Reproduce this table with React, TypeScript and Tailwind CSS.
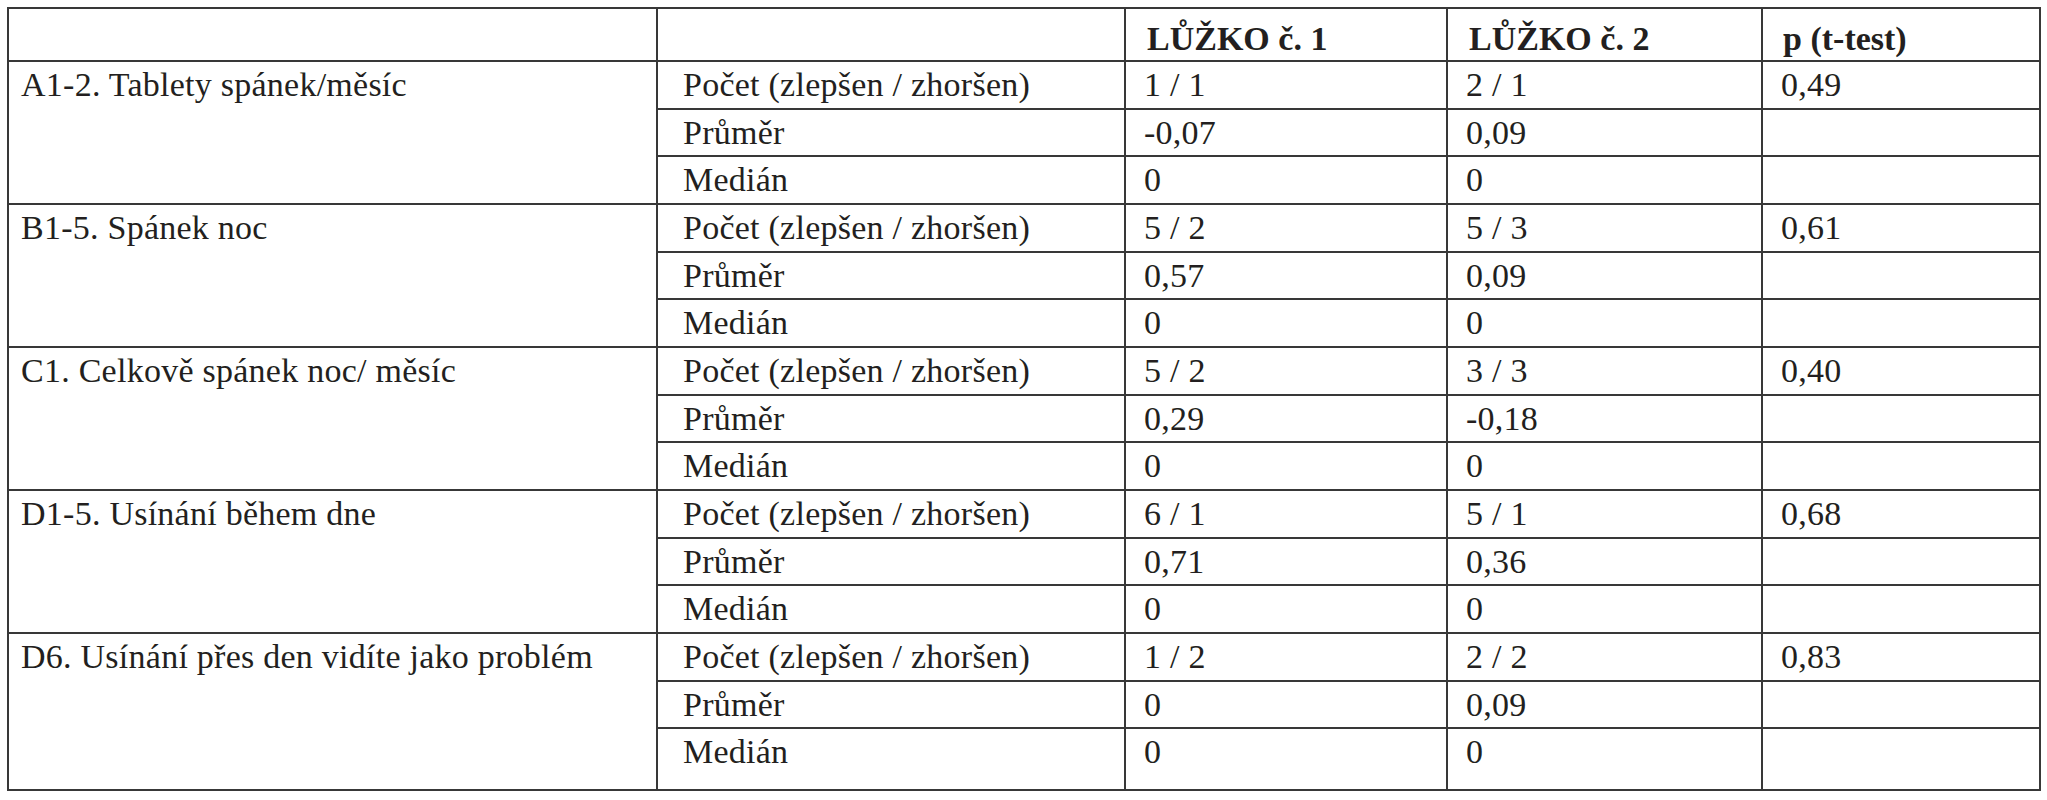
import React from "react";

type Group = {
  title: string;
  rows: { label: string; a: string; b: string; p: string }[];
};

const GROUPS: Group[] = [
  {
    title: "A1-2. Tablety spánek/měsíc",
    rows: [
      { label: "Počet (zlepšen / zhoršen)", a: "1 / 1", b: "2 / 1", p: "0,49" },
      { label: "Průměr", a: "-0,07", b: "0,09", p: "" },
      { label: "Medián", a: "0", b: "0", p: "" },
    ],
  },
  {
    title: "B1-5. Spánek noc",
    rows: [
      { label: "Počet (zlepšen / zhoršen)", a: "5 / 2", b: "5 / 3", p: "0,61" },
      { label: "Průměr", a: "0,57", b: "0,09", p: "" },
      { label: "Medián", a: "0", b: "0", p: "" },
    ],
  },
  {
    title: "C1. Celkově spánek noc/ měsíc",
    rows: [
      { label: "Počet (zlepšen / zhoršen)", a: "5 / 2", b: "3 / 3", p: "0,40" },
      { label: "Průměr", a: "0,29", b: "-0,18", p: "" },
      { label: "Medián", a: "0", b: "0", p: "" },
    ],
  },
  {
    title: "D1-5. Usínání během dne",
    rows: [
      { label: "Počet (zlepšen / zhoršen)", a: "6 / 1", b: "5 / 1", p: "0,68" },
      { label: "Průměr", a: "0,71", b: "0,36", p: "" },
      { label: "Medián", a: "0", b: "0", p: "" },
    ],
  },
  {
    title: "D6. Usínání přes den vidíte jako problém",
    rows: [
      { label: "Počet (zlepšen / zhoršen)", a: "1 / 2", b: "2 / 2", p: "0,83" },
      { label: "Průměr", a: "0", b: "0,09", p: "" },
      { label: "Medián", a: "0", b: "0", p: "" },
    ],
  },
];

// all cells share the same frame; only left padding differs per column
const cell = "border-2 border-[#383838] align-top pt-[6px] leading-[34px] whitespace-nowrap";

export default function App() {
  return (
    <div className="min-h-[800px] bg-white pl-[7px] pt-[7px] font-['Liberation_Serif',serif] text-[34px] tracking-[0.25px] text-[#231f20]">
      <table className="w-[2032px] table-fixed border-collapse">
        <colgroup>
          <col className="w-[649px]" />
          <col className="w-[468px]" />
          <col className="w-[322px]" />
          <col className="w-[315px]" />
          <col className="w-[278px]" />
        </colgroup>
        <thead>
          <tr className="h-[53px]">
            <th className={`${cell} pl-[12px]`}></th>
            <th className={`${cell} pl-[25px]`}></th>
            <th className={`${cell} pt-[13px] pl-[21px] text-left font-bold tracking-normal`}>LŮŽKO č. 1</th>
            <th className={`${cell} pt-[13px] pl-[21px] text-left font-bold tracking-normal`}>LŮŽKO č. 2</th>
            <th className={`${cell} pt-[13px] pl-[20px] text-left font-bold tracking-normal`}>p (t-test)</th>
          </tr>
        </thead>
        <tbody>
          {GROUPS.map((g, gi) =>
            g.rows.map((r, ri) => {
              const last = gi === GROUPS.length - 1 && ri === 2;
              return (
                <tr key={`${gi}-${ri}`} className={last ? "h-[62px]" : ri === 1 ? "h-[47px]" : "h-[48px]"}>
                  {ri === 0 && (
                    <td rowSpan={3} className={`${cell} pl-[12px]`}>
                      {g.title}
                    </td>
                  )}
                  <td className={`${cell} pl-[25px]`}>{r.label}</td>
                  <td className={`${cell} pl-[18px]`}>{r.a}</td>
                  <td className={`${cell} pl-[18px]`}>{r.b}</td>
                  <td className={`${cell} pl-[18px]`}>{r.p}</td>
                </tr>
              );
            })
          )}
        </tbody>
      </table>
    </div>
  );
}
